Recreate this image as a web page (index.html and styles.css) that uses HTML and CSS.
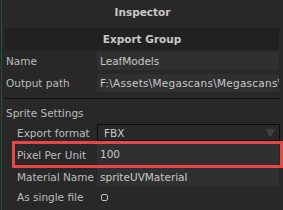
FILE: index.html
```html
<!DOCTYPE html>
<html>
<head>
<meta charset="utf-8">
<link rel="stylesheet" href="styles.css">
</head>
<body>
<div class="frame">
  <div class="title">Inspector</div>
  <div class="panel">
    <div class="group-header">Export Group</div>
    <div class="row first">
      <div class="label">Name</div>
      <div class="field">LeafModels</div>
    </div>
    <div class="row gap4">
      <div class="label">Output path</div>
      <div class="field path">F:\Assets\Megascans\Megascans\Leaf</div>
    </div>
    <div class="separator"></div>
    <div class="section">Sprite Settings</div>
    <div class="row sub dropdown-row">
      <div class="label">Export format</div>
      <div class="dropdown">
        <span>FBX</span>
        <svg class="arrow" width="9" height="8" viewBox="0 0 9 8"><polygon points="0,0 9,0 4.5,8" fill="#4a4a4a"/><polygon points="1,0 8,0 4.5,6" fill="#3c3c3c"/></svg>
      </div>
    </div>
    <div class="row sub ppu">
      <div class="label">Pixel Per Unit</div>
      <div class="field">100</div>
      <div class="highlight"></div>
    </div>
    <div class="row sub material">
      <div class="label">Material Name</div>
      <div class="field">spriteUVMaterial</div>
    </div>
    <div class="row sub check-row">
      <div class="label">As single file</div>
      <div class="check-cell"><span class="checkbox"></span></div>
    </div>
  </div>
</div>
</body>
</html>
```
FILE: styles.css
```css
html, body {
  margin: 0;
  padding: 0;
  background: #282828;
}
body {
  width: 283px;
  height: 210px;
  overflow: hidden;
  font-family: "DejaVu Sans", Verdana, sans-serif;
  font-size: 10.5px;
  color: #c4c4c4;
}
.frame {
  margin-left: 1px;
  border-left: 1px solid #2c4a2e;
  height: 210px;
}
.title {
  height: 28px;
  box-sizing: border-box;
  padding-top: 5px;
  line-height: 15px;
  text-align: center;
  font-weight: bold;
  color: #c8c8c8;
}
.panel {
  margin-left: 3px;
  margin-right: 4px;
}
.group-header {
  height: 22px;
  line-height: 22px;
  background: #212121;
  text-align: center;
  font-weight: bold;
  color: #c8c8c8;
}
.row {
  display: flex;
  align-items: center;
  height: 18px;
  position: relative;
}
.row.first { margin-top: 2px; }
.row.gap4 { margin-top: 4px; }
.label {
  width: 92px;
  flex: none;
  box-sizing: border-box;
  padding-left: 1px;
  white-space: nowrap;
  color: #bcbcbc;
}
.row.sub .label { padding-left: 12px; }
.field {
  flex: 1;
  height: 100%;
  min-width: 0;
  background: #303030;
  padding-left: 3px;
  line-height: 18px;
  white-space: nowrap;
  overflow: hidden;
  color: #c8c8c8;
}
.field.path { letter-spacing: 0.25px; }
.separator {
  margin-top: 6px;
  height: 1px;
  background: #101010;
}
.section {
  height: 25px;
  box-sizing: border-box;
  padding-top: 7px;
  padding-left: 1px;
  line-height: 14px;
  color: #bcbcbc;
}
.dropdown-row { height: 17px; }
.dropdown {
  flex: 1;
  height: 17px;
  box-sizing: border-box;
  border: 1px solid #0c0c0c;
  margin-right: -1px;
  background: #292929;
  display: flex;
  align-items: center;
  justify-content: space-between;
  padding: 0 4px 0 6px;
  color: #c8c8c8;
}
.arrow { display: block; }
.ppu {
  margin-top: 3px;
  height: 21px;
}
.ppu .field { line-height: 21px; }
.highlight {
  position: absolute;
  left: 7px;
  right: -4px;
  top: -3px;
  bottom: -3px;
  border: 3px solid #e84646;
  pointer-events: none;
}
.material {
  margin-top: 3px;
  height: 18px;
}
.check-row {
  height: 18px;
  margin-top: 2px;
}
.check-cell {
  flex: 1;
  height: 100%;
  display: flex;
  align-items: center;
  padding-left: 4px;
}
.checkbox {
  width: 7px;
  height: 7px;
  box-sizing: border-box;
  border: 1px solid #c0c0c0;
  border-radius: 2px;
}
```
